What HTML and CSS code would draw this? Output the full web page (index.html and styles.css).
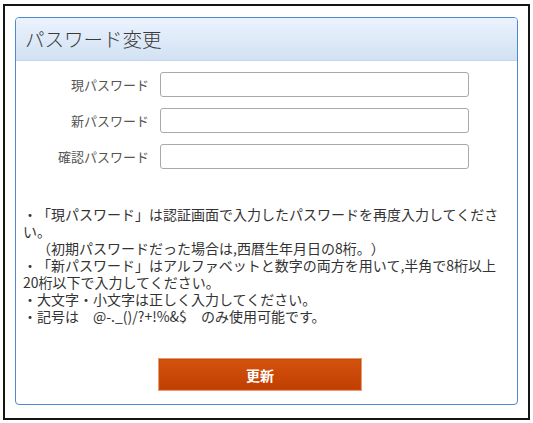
FILE: index.html
```html
<!DOCTYPE html>
<html lang="ja">
<head>
<meta charset="utf-8">
<link rel="stylesheet" href="styles.css">
</head>
<body>
<div class="frame">
  <div class="panel">
    <div class="panel-header">パスワード変更</div>
    <div class="panel-body">
      <div class="form">
        <label class="label" for="cur">現パスワード</label>
        <input class="field" id="cur" type="password">
        <label class="label" for="new">新パスワード</label>
        <input class="field" id="new" type="password">
        <label class="label" for="conf">確認パスワード</label>
        <input class="field" id="conf" type="password">
      </div>
      <div class="notes">
        <p>・「現パスワード」は認証画面で入力したパスワードを再度入力してください。</p>
        <p>　（初期パスワードだった場合は,西暦生年月日の8桁。）</p>
        <p>・「新パスワード」はアルファベットと数字の両方を用いて,半角で8桁以上20桁以下で入力してください。</p>
        <p>・大文字・小文字は正しく入力してください。</p>
        <p>・記号は　@-._()/?+!%&amp;$　のみ使用可能です。</p>
      </div>
      <div class="actions">
        <button class="btn" type="button">更新</button>
      </div>
    </div>
  </div>
</div>
</body>
</html>
```
FILE: styles.css
```css
* { box-sizing: border-box; }
html, body { margin: 0; padding: 0; background: #fff; }
body {
  font-family: "Noto Sans CJK JP", "Noto Sans", sans-serif;
  color: #333;
  text-spacing-trim: space-all;
  font-feature-settings: "fwid" 0;
}
.frame {
  width: 527px;
  height: 416px;
  margin: 4px 0 0 3px;
  border: 2px solid #151515;
  padding: 11px 0 0 10px;
}
.panel {
  width: 503px;
  height: 388px;
  border: 1px solid #4d89cc;
  border-radius: 4px;
  overflow: hidden;
}
.panel-header {
  height: 43px;
  background: linear-gradient(#ebf3fd, #d2e1f3);
  border-bottom: 1px solid #c4d6ec;
  padding-left: 9px;
  font-size: 19.5px;
  line-height: 42px;
  color: #3a3a3a;
  font-weight: 300;
}
.panel-body {
  padding: 11px 8px 0 7px;
}
.form {
  display: grid;
  grid-template-columns: 126px 309px;
  column-gap: 11px;
  row-gap: 11px;
  align-items: center;
}
.label {
  text-align: right;
  font-size: 13px;
  color: #555;
  line-height: 25px;
}
.field {
  height: 25px;
  margin: 0;
  border: 1px solid #a9a9a9;
  border-radius: 3px;
  background: #fff;
  padding: 0 4px;
}
.notes {
  margin-top: 37px;
  font-size: 14px;
  line-height: 17px;
  color: #333;
}
.notes p { margin: 0; }
.actions {
  margin-top: 33px;
  padding-left: 135px;
}
.btn {
  width: 204px;
  height: 33px;
  border: 1px solid #e89a70;
  background: linear-gradient(#d4530c, #c03e02);
  box-shadow: inset 0 0 0 1px #c8490a;
  color: #fff;
  font-family: "Noto Sans CJK JP", sans-serif;
  font-weight: 700;
  font-size: 14px;
  padding: 0;
}
```
